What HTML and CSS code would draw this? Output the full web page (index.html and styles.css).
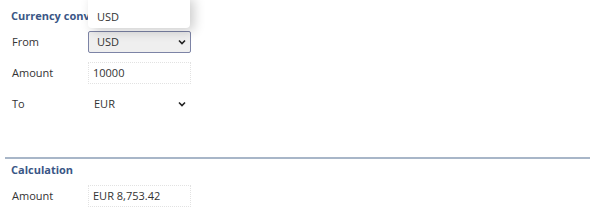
FILE: index.html
```html
<!DOCTYPE html>
<html lang="en">
<head>
<meta charset="UTF-8">
<title>Currency converter</title>
<link rel="stylesheet" href="styles.css">
</head>
<body>
<div class="panel">
  <h3 class="section-title clipped">Currency converter</h3>
  <div class="row">
    <label>From</label>
    <div class="select-wrap">
      <select class="field field-open"><option>USD</option><option>EUR</option></select>
      <svg class="chevron" width="8" height="6" viewBox="0 0 8 6"><path d="M1 1.5 L4 4.5 L7 1.5" fill="none" stroke="#222" stroke-width="1.6"/></svg>
      <div class="dropdown">
        <div class="dropdown-item">USD</div>
      </div>
    </div>
  </div>
  <div class="row">
    <label>Amount</label>
    <input class="field field-input" type="text" value="10000">
  </div>
  <div class="row">
    <label>To</label>
    <div class="select-wrap">
      <select class="field field-plain"><option>EUR</option><option>USD</option></select>
      <svg class="chevron" width="8" height="6" viewBox="0 0 8 6"><path d="M1 1.5 L4 4.5 L7 1.5" fill="none" stroke="#222" stroke-width="1.6"/></svg>
    </div>
  </div>

  <hr class="divider">

  <h3 class="section-title calc">Calculation</h3>
  <div class="row">
    <label>Amount</label>
    <input class="field field-input" type="text" value="EUR 8,753.42" readonly>
  </div>
</div>
</body>
</html>
```

FILE: styles.css
```css
body {
  margin: 0;
  background: #fff;
  font-family: "Open Sans", "Noto Sans", Arial, sans-serif;
  font-size: 11px;
  color: #333;
  overflow: hidden;
}
.panel {
  padding: 9px 0 0 12px;
}
.section-title {
  margin: 0 0 3px -1px;
  font-size: 11px;
  line-height: 14px;
  font-weight: bold;
  color: #3a5686;
}
/* heading runs under the open dropdown */
.section-title.clipped {
  width: 77px;
  overflow: hidden;
  white-space: nowrap;
}
.row {
  display: flex;
  align-items: center;
  height: 31px;
}
.row label {
  width: 76px;
  color: #333;
}
.select-wrap {
  position: relative;
  width: 103px;
}
.field {
  display: block;
  box-sizing: border-box;
  width: 103px;
  height: 22px;
  margin: 0;
  font-family: inherit;
  font-size: 11px;
  color: #333;
  outline: none;
  appearance: none;
  -webkit-appearance: none;
}
.field-open {
  padding: 0 0 0 8px;
  border: 1px solid #7d84a6;
  border-radius: 2px;
  background: #efefef;
}
.field-plain {
  padding: 0 0 0 5px;
  border: 1px solid transparent;
  background: #fff;
}
.field-input {
  padding: 0 0 0 4px;
  border: 1px dotted #e2e2e2;
  background: #fff;
}
.chevron {
  position: absolute;
  right: 5px;
  top: 8px;
  pointer-events: none;
}
.dropdown {
  position: absolute;
  left: 0;
  bottom: 25px;
  width: 102px;
  height: 32px;
  background: #fff;
  border-radius: 0 0 4px 4px;
  box-shadow: 4px 3px 12px rgba(0, 0, 0, 0.2);
}
.dropdown-item {
  position: absolute;
  left: 9px;
  bottom: 4px;
  color: #333;
}
.divider {
  margin: 38px 0 0 -7px;
  border: none;
  border-top: 2px solid #a8b6c8;
}
.section-title.calc {
  margin-top: 4px;
}
```
